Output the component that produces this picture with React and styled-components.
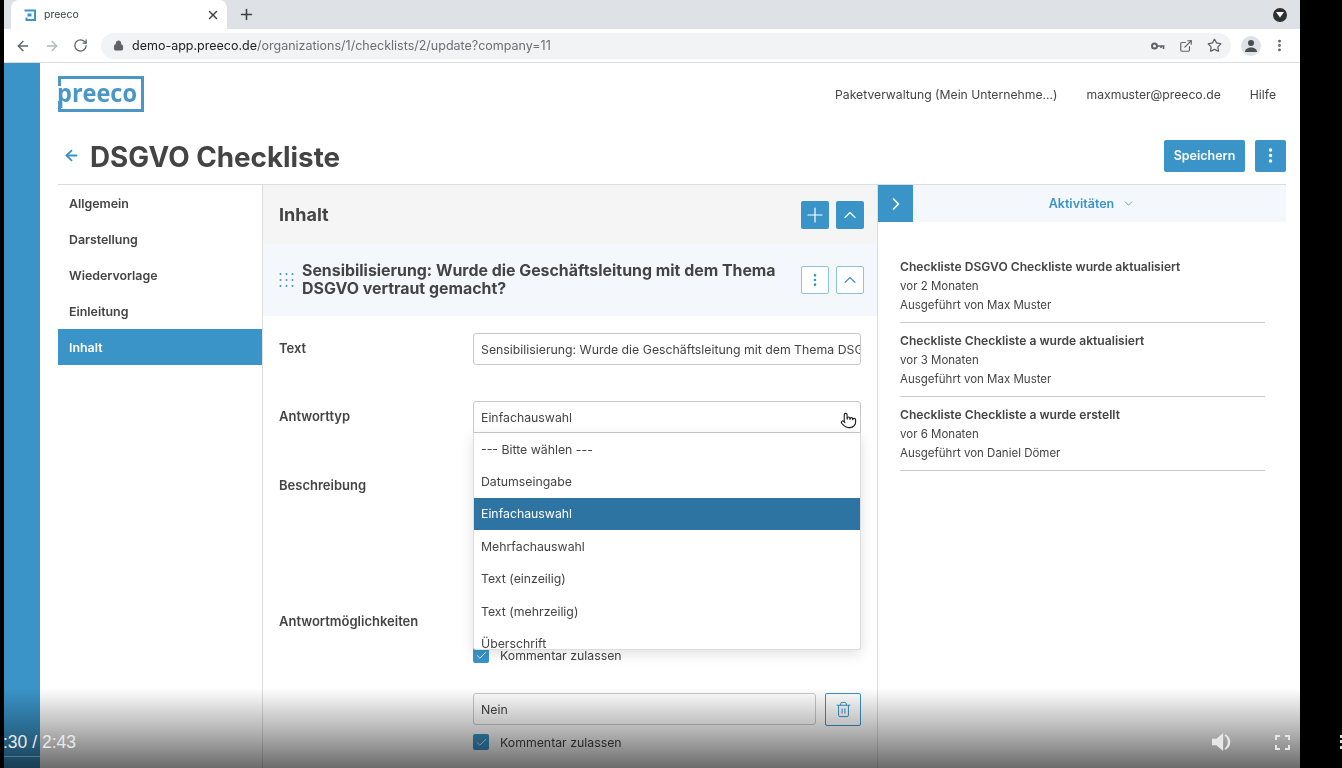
import React from 'react'
import styled, { createGlobalStyle } from 'styled-components'
import { ArrowLeft, ArrowRight, RotateCw, Lock, X, Plus, ExternalLink, Star, ChevronRight, ChevronUp, ChevronDown, EllipsisVertical, Check, Trash2, Pointer } from 'lucide-react'

const GlobalStyle = createGlobalStyle`
  html, body {
    margin: 0;
    padding: 0;
    background: #000;
    overflow: hidden;
  }
  * { box-sizing: border-box; }
`

const menu = ['--- Bitte wählen ---', 'Datumseingabe', 'Einfachauswahl', 'Mehrfachauswahl', 'Text (einzeilig)', 'Text (mehrzeilig)', 'Überschrift']
const sections = ['Allgemein', 'Darstellung', 'Wiedervorlage', 'Einleitung', 'Inhalt']
const activities = [
  ['Checkliste DSGVO Checkliste wurde aktualisiert', 'vor 2 Monaten', 'Ausgeführt von Max Muster'],
  ['Checkliste Checkliste a wurde aktualisiert', 'vor 3 Monaten', 'Ausgeführt von Max Muster'],
  ['Checkliste Checkliste a wurde erstellt', 'vor 6 Monaten', 'Ausgeführt von Daniel Dömer'],
]

const App = () => {
  return (
    <Video>
      <GlobalStyle />
      <Screen>
        <TabStrip>
          <Tab>
            <svg width="12" height="12" viewBox="0 0 12 12">
              <path d="M0.5 1.5h10.5v9.5H2.5V8.5" fill="none" stroke="#3a94c8" strokeWidth="2" />
              <rect x="3.5" y="4.5" width="4" height="3" fill="#3a94c8" />
            </svg>
            <TabTitle>preeco</TabTitle>
            <X size={14} strokeWidth={2.4} color="#3c4043" />
          </Tab>
          <NewTab><Plus size={17} strokeWidth={2.2} color="#3c4043" /></NewTab>
          <TabMenu>
            <svg width="8" height="6" viewBox="0 0 8 6" fill="#fff"><path d="M0 0h8L4 5.500z" /></svg>
          </TabMenu>
        </TabStrip>
        <Toolbar>
          <NavIcons>
            <ArrowLeft size={16} color="#5f6368" />
            <ArrowRight size={16} color="#b4b7bb" />
            <RotateCw size={15} color="#5f6368" />
          </NavIcons>
          <UrlPill>
            <Lock size={11} fill="#5f6368" color="#5f6368" />
            <Url><b>demo-app.preeco.de</b>/organizations/1/checklists/2/update?company=11</Url>
            <UrlActions>
              <svg width="14" height="14" viewBox="0 0 14 14" fill="none" stroke="#5f6368">
                <circle cx="3.500" cy="7" r="2.500" strokeWidth="2" />
                <path d="M6 7h7.500M12.500 7v3M10 7v2" strokeWidth="1.600" />
              </svg>
              <ExternalLink size={14} color="#5f6368" />
              <Star size={15} color="#5f6368" />
            </UrlActions>
          </UrlPill>
          <Avatar>
            <svg width="14" height="14" viewBox="0 0 14 14" fill="#4a4e52">
              <circle cx="7" cy="4" r="3" />
              <path d="M1 13c0-3 3-4.500 6-4.500s6 1.500 6 4.500z" />
            </svg>
          </Avatar>
          <EllipsisVertical size={15} color="#5f6368" strokeWidth={2.6} />
        </Toolbar>
        <Page>
          <Rail />
          <Main>
            <Header>
              <svg width="86" height="36" viewBox="0 0 86 36">
                <path d="M1.500 10V1.500h83v33H1.500V25" fill="none" stroke="#4a97c7" strokeWidth="3" />
                <text x="-1" y="25.500" textLength="80" lengthAdjust="spacingAndGlyphs" fontFamily="'Open Sans', sans-serif" fontWeight="700" fontSize="25" fill="#4a97c7">preeco</text>
              </svg>
              <HeaderNav>
                <span>Paketverwaltung (Mein Unternehme...)</span>
                <span>maxmuster@preeco.de</span>
                <span>Hilfe</span>
              </HeaderNav>
            </Header>
            <TitleRow>
              <ArrowLeft size={17} color="#3a94c8" strokeWidth={2.6} />
              <Title>DSGVO Checkliste</Title>
              <SaveButton>Speichern</SaveButton>
              <KebabButton><EllipsisVertical size={19} color="#fff" strokeWidth={2.4} /></KebabButton>
            </TitleRow>
            <Columns>
              <Sidebar>
                {sections.map((s) => (
                  <SideItem key={s} $active={s === 'Inhalt'}>{s}</SideItem>
                ))}
              </Sidebar>
              <Editor>
                <EditorHead>
                  <EditorTitle>Inhalt</EditorTitle>
                  <IconButton><Plus size={24} strokeWidth={1.2} color="#fff" /></IconButton>
                  <IconButton><ChevronUp size={20} strokeWidth={1.3} color="#fff" /></IconButton>
                </EditorHead>
                <QuestionHead>
                  <svg width="15" height="14" viewBox="0 0 15 14" fill="#3a94c8">
                    {[1, 7, 13].map((y) => [1.500, 7.500, 13.500].map((x) => (
                      <circle key={`${x}-${y}`} cx={x} cy={y} r="1" />
                    )))}
                  </svg>
                  <QuestionTitle>Sensibilisierung: Wurde die Geschäftsleitung mit dem Thema DSGVO vertraut gemacht?</QuestionTitle>
                  <IconButton $outline><EllipsisVertical size={16} strokeWidth={2} color="#3a94c8" /></IconButton>
                  <IconButton $outline><ChevronUp size={20} strokeWidth={1.3} color="#3a94c8" /></IconButton>
                </QuestionHead>
                <Form>
                  <Row>
                    <Label>Text</Label>
                    <Input>Sensibilisierung: Wurde die Geschäftsleitung mit dem Thema DSGVO vertraut gemacht?</Input>
                  </Row>
                  <Row>
                    <Label>Antworttyp</Label>
                    <SelectField>
                      <Input $open>Einfachauswahl</Input>
                      <Menu>
                        {menu.map((m) => (
                          <MenuItem key={m} $selected={m === 'Einfachauswahl'}>{m}</MenuItem>
                        ))}
                      </Menu>
                      <HandCursor><Pointer size={17} fill="#fff" color="#222" strokeWidth={1.6} /></HandCursor>
                    </SelectField>
                  </Row>
                  <DescriptionRow>
                    <Label>Beschreibung</Label>
                    <TextArea />
                  </DescriptionRow>
                  <Row>
                    <Label>Antwortmöglichkeiten</Label>
                    <Answers>
                      <Answer>
                        <AnswerInput>
                          <Input>Ja</Input>
                          <TrashButton><Trash2 size={17} strokeWidth={1.4} color="#3a94c8" /></TrashButton>
                        </AnswerInput>
                        <CheckRow>
                          <CheckBox><Check size={13} strokeWidth={1.5} color="#fff" /></CheckBox>
                          Kommentar zulassen
                        </CheckRow>
                      </Answer>
                      <Answer>
                        <AnswerInput>
                          <Input>Nein</Input>
                          <TrashButton><Trash2 size={17} strokeWidth={1.4} color="#3a94c8" /></TrashButton>
                        </AnswerInput>
                        <CheckRow>
                          <CheckBox><Check size={13} strokeWidth={1.5} color="#fff" /></CheckBox>
                          Kommentar zulassen
                        </CheckRow>
                      </Answer>
                    </Answers>
                  </Row>
                </Form>
              </Editor>
              <Activity>
                <ActivityHead>
                  <CollapseButton><ChevronRight size={20} strokeWidth={2} color="#fff" /></CollapseButton>
                  <ActivityTitle>Aktivitäten<ChevronDown size={13} strokeWidth={1.5} /></ActivityTitle>
                </ActivityHead>
                <ActivityList>
                  {activities.map((a) => (
                    <ActivityItem key={a[0]}>
                      <strong>{a[0]}</strong>
                      <span>{a[1]}</span>
                      <span>{a[2]}</span>
                    </ActivityItem>
                  ))}
                </ActivityList>
              </Activity>
            </Columns>
          </Main>
        </Page>
      </Screen>
      <PlayerShade>
        <ProgressLine />
        <TimeCode>:30 / 2:43</TimeCode>
        <PlayerIcons>
          <svg width="20" height="20" viewBox="0 0 18 18" fill="#e6e6e6">
            <path d="M0 6h4l6-5v16l-6-5H0z" />
            <path d="M12 2c6 3 6 11 0 14l-.8-1.200c4-2.500 4-9 0-11.600z" />
          </svg>
          <svg width="15" height="15" viewBox="0 0 15 15" fill="none" stroke="#e6e6e6" strokeWidth="2">
            <path d="M1 5V1h4M10 1h4v4M14 10v4h-4M5 14H1v-4" />
          </svg>
        </PlayerIcons>
      </PlayerShade>
      <ClippedDots />
    </Video>
  )
}

const Video = styled.div`
  position: relative;
  width: 1342px;
  height: 768px;
  overflow: hidden;
  background: #000;
  font-family: Inter, 'Liberation Sans', sans-serif;
  color: #444;
`

const Screen = styled.div`
  width: 1296px;
  height: 768px;
  margin-left: 4px;
  display: flex;
  flex-direction: column;
  background: #fff;
  filter: blur(0.35px);
`

const TabStrip = styled.div`
  height: 29px;
  flex: none;
  display: flex;
  align-items: center;
  background: #dee1e6;
  padding: 0 13px 0 7px;
`

const Tab = styled.div`
  width: 216px;
  height: 29px;
  display: flex;
  align-items: center;
  gap: 8px;
  padding: 0 7px 0 13px;
  background: #fff;
  border-radius: 8px 8px 0 0;
`

const TabTitle = styled.span`
  flex: 1;
  font-size: 10.5px;
  color: #3c4043;
`

const NewTab = styled.div`
  margin-left: 11px;
  display: flex;
`

const TabMenu = styled.div`
  margin-left: auto;
  width: 14px;
  height: 14px;
  border-radius: 50%;
  background: #2f3133;
  display: flex;
  align-items: center;
  justify-content: center;
`

const Toolbar = styled.div`
  height: 34px;
  flex: none;
  display: flex;
  align-items: center;
  background: #fff;
  border-bottom: 1px solid #dadce0;
  padding: 0 12px 0 11px;
`

const NavIcons = styled.div`
  display: flex;
  align-items: center;
  gap: 13px;
  width: 86px;
`

const UrlPill = styled.div`
  width: 1130px;
  height: 26px;
  display: flex;
  align-items: center;
  gap: 8px;
  padding: 0 9px 0 12px;
  background: #f1f3f4;
  border-radius: 13px;
`

const Url = styled.div`
  flex: 1;
  font-size: 12.5px;
  color: #6b6f74;

  b {
    font-weight: 400;
    color: #202124;
  }
`

const UrlActions = styled.div`
  display: flex;
  align-items: center;
  gap: 14px;
`

const Avatar = styled.div`
  width: 20px;
  height: 20px;
  margin: 0 11px 0 10px;
  border-radius: 50%;
  background: #dee1e6;
  display: flex;
  align-items: center;
  justify-content: center;
`

const Page = styled.div`
  flex: 1;
  min-height: 0;
  display: flex;
`

const Rail = styled.div`
  width: 36px;
  flex: none;
  background: #3a94c8;
`

const Main = styled.div`
  flex: 1;
  min-width: 0;
  display: flex;
  flex-direction: column;
  padding: 0 14px 0 18px;
`

const Header = styled.header`
  height: 62px;
  flex: none;
  display: flex;
  align-items: center;
  justify-content: space-between;
  padding-right: 10px;
`

const HeaderNav = styled.nav`
  display: flex;
  gap: 29px;
  font-size: 12.2px;
  color: #444;
`

const TitleRow = styled.div`
  height: 59px;
  flex: none;
  display: flex;
  align-items: center;
  padding: 2px 0 0 5px;
`

const Title = styled.h1`
  flex: 1;
  margin: 0 0 0 10px;
  padding-top: 2px;
  font-size: 27.8px;
  font-weight: 700;
  color: #444;
`

const SaveButton = styled.button`
  height: 32px;
  width: 81px;
  padding: 0;
  border: none;
  border-radius: 2px;
  background: #3a94c8;
  color: #fff;
  font: 600 12.5px Inter, sans-serif;
`

const KebabButton = styled.button`
  height: 32px;
  width: 31px;
  margin-left: 10px;
  padding: 0;
  border: none;
  border-radius: 2px;
  background: #3a94c8;
  display: flex;
  align-items: center;
  justify-content: center;
`

const Columns = styled.div`
  flex: 1;
  min-height: 0;
  display: flex;
  border-top: 1px solid #dcdcdc;
`

const Sidebar = styled.aside`
  width: 205px;
  flex: none;
  border-right: 1px solid #ddd;
`

const SideItem = styled.div`
  height: 36px;
  display: flex;
  align-items: center;
  padding-left: 11px;
  font-size: 12.4px;
  font-weight: 600;
  color: ${(p) => (p.$active ? '#fff' : '#444')};
  background: ${(p) => (p.$active ? '#3a94c8' : 'transparent')};
`

const Editor = styled.section`
  width: 615px;
  flex: none;
  border-right: 1px solid #ddd;
`

const EditorHead = styled.div`
  height: 59px;
  display: flex;
  align-items: center;
  gap: 7px;
  padding: 0 13px 0 16px;
  background: #f5f5f5;
`

const EditorTitle = styled.h2`
  flex: 1;
  margin: 0;
  font-size: 18px;
  font-weight: 700;
  color: #444;
`

const IconButton = styled.div`
  width: 28px;
  height: 28px;
  flex: none;
  display: flex;
  align-items: center;
  justify-content: center;
  border-radius: 2px;
  background: ${(p) => (p.$outline ? '#fff' : '#3a94c8')};
  border: ${(p) => (p.$outline ? '1px solid #8cc3e0' : 'none')};
`

const QuestionHead = styled(EditorHead)`
  height: 72px;
  background: #f4f8fc;
`

const QuestionTitle = styled.h3`
  flex: 1;
  margin: 0 5px 0 1px;
  font-size: 15.9px;
  line-height: 18.500px;
  font-weight: 700;
  color: #444;
`

const Form = styled.div`
  display: flex;
  flex-direction: column;
  gap: 36px;
  padding: 17px 16px 0;
`

const Row = styled.div`
  display: flex;
  align-items: flex-start;
`

const DescriptionRow = styled(Row)`
  margin-top: 1px;
`

const Label = styled.label`
  width: 194px;
  flex: none;
  line-height: 31px;
  font-size: 13px;
  font-weight: 600;
  color: #444;
`

const Input = styled.div`
  flex: 1;
  min-width: 0;
  height: 32px;
  padding: 0 7px;
  line-height: 32px;
  font-size: 12.3px;
  color: #444;
  white-space: nowrap;
  overflow: hidden;
  background: #fff;
  border: 1px solid #c9c9c9;
  border-radius: ${(p) => (p.$open ? '3px 3px 0 0' : '3px')};
`

const SelectField = styled.div`
  position: relative;
  width: 388px;
  display: flex;
`

const Menu = styled.div`
  position: absolute;
  z-index: 2;
  top: 32px;
  left: 0;
  right: 0;
  height: 217px;
  overflow: hidden;
  background: #fff;
  border: 1px solid #ddd;
  border-top: none;
  border-radius: 0 0 3px 3px;
  box-shadow: 0 4px 14px rgba(0, 0, 0, 0.12);
`

const MenuItem = styled.div`
  height: 32.400px;
  display: flex;
  align-items: center;
  padding-left: 7px;
  font-size: 12.3px;
  color: ${(p) => (p.$selected ? '#fff' : '#444')};
  background: ${(p) => (p.$selected ? '#2e74a3' : 'transparent')};
`

const HandCursor = styled.div`
  position: absolute;
  z-index: 3;
  top: 11px;
  right: 4px;
  display: flex;
`

const TextArea = styled.div`
  width: 388px;
  height: 100px;
  border: 1px solid #c9c9c9;
  border-radius: 3px;
`

const Answers = styled.div`
  width: 388px;
  display: flex;
  flex-direction: column;
  gap: 30px;
`

const Answer = styled.div`
  display: flex;
  flex-direction: column;
  gap: 8px;
`

const AnswerInput = styled.div`
  display: flex;
  gap: 9px;
`

const TrashButton = styled.div`
  width: 36px;
  height: 33px;
  flex: none;
  display: flex;
  align-items: center;
  justify-content: center;
  background: #fff;
  border: 1px solid #3a94c8;
  border-radius: 2px;
`

const CheckRow = styled.div`
  display: flex;
  align-items: center;
  gap: 11px;
  height: 16px;
  font-size: 12.3px;
  color: #444;
`

const CheckBox = styled.span`
  width: 16px;
  height: 16px;
  display: flex;
  align-items: center;
  justify-content: center;
  border-radius: 2px;
  background: #3a94c8;
`

const Activity = styled.section`
  flex: 1;
  min-width: 0;
`

const ActivityHead = styled.div`
  height: 37px;
  display: flex;
  align-items: center;
  background: #f4f8fc;
`

const CollapseButton = styled.div`
  width: 35px;
  height: 37px;
  flex: none;
  display: flex;
  align-items: center;
  justify-content: center;
  background: #3a94c8;
`

const ActivityTitle = styled.div`
  flex: 1;
  display: flex;
  align-items: center;
  justify-content: center;
  gap: 8px;
  padding-right: 15px;
  font-size: 12.5px;
  font-weight: 600;
  color: #3a94c8;
`

const ActivityList = styled.div`
  display: flex;
  flex-direction: column;
  padding: 27px 21px 0 22px;
`

const ActivityItem = styled.div`
  height: 74px;
  padding-top: 8px;
  display: flex;
  flex-direction: column;
  font-size: 11.5px;
  line-height: 19px;
  color: #444;
  border-bottom: 1px solid #ccc;

  strong {
    font-size: 12.1px;
    line-height: 20px;
    font-weight: 600;
  }
`

const PlayerShade = styled.div`
  position: absolute;
  left: 4px;
  right: 42px;
  bottom: 0;
  height: 80px;
  background: linear-gradient(to bottom, rgba(0, 0, 0, 0), rgba(0, 0, 0, 0.3) 55%, rgba(0, 0, 0, 0.58));
`

const ProgressLine = styled.div`
  position: absolute;
  left: 0;
  bottom: 11px;
  width: 36px;
  height: 1px;
  background: rgba(255, 255, 255, 0.25);
`

const TimeCode = styled.div`
  position: absolute;
  left: -1px;
  bottom: 15px;
  font: 17.5px 'Liberation Sans', sans-serif;
  color: #e8e8e8;
`

const PlayerIcons = styled.div`
  position: absolute;
  right: 10px;
  bottom: 16px;
  display: flex;
  align-items: center;
  gap: 43px;
`

const ClippedDots = styled.div`
  position: absolute;
  right: 0;
  top: 735px;
  width: 2px;
  height: 14px;
  background: repeating-linear-gradient(to bottom, #ddd 0, #ddd 3px, transparent 3px, transparent 5.500px);
`

export default App
